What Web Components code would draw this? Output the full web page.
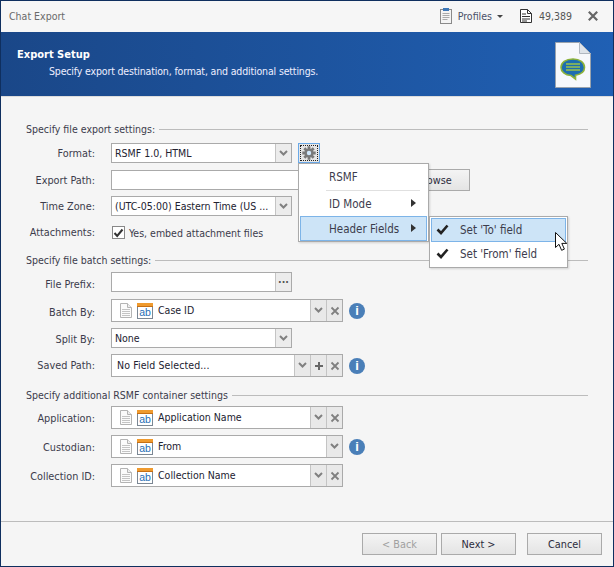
<!DOCTYPE html>
<html><head><meta charset="utf-8"><style>
html,body{margin:0;padding:0;background:#f5f5f5}
body{font:10.5px "DejaVu Sans Condensed","DejaVu Sans",sans-serif;color:#3c3c4c}
</style></head><body>
<x-window>
  <x-titlebar slot="title"></x-titlebar>
  <x-banner slot="banner" heading="Export Setup" sub="Specify export destination, format, and additional settings."></x-banner>
  <x-group label="Specify file export settings:" top="25" below="7">
    <x-row label="Format:"><x-combo h="20" text="RSMF 1.0, HTML"></x-combo><x-gear></x-gear></x-row>
    <x-row label="Export Path:" gap="7"><x-input w="283" h="20"></x-input><x-button w="72" h="22" style="margin:-1px 0 -1px -2px">Browse</x-button></x-row>
    <x-row label="Time Zone:" gap="6"><x-combo h="20" text="(UTC-05:00) Eastern Time (US ..."></x-combo></x-row>
    <x-row label="Attachments:" gap="10"><x-check>Yes, embed attachment files</x-check></x-row>
  </x-group>
  <x-group label="Specify file batch settings:" top="14" below="5">
    <x-row label="File Prefix:" ly="2"><x-combo h="20" dots></x-combo></x-row>
    <x-row label="Batch By:" gap="7" ly="2"><x-field text="Case ID" icons btns="vx"></x-field><x-info></x-info></x-row>
    <x-row label="Split By:" gap="6" ly="1"><x-combo h="20" text="None"></x-combo></x-row>
    <x-row label="Saved Path:" gap="6"><x-field text="No Field Selected..." btns="v+x"></x-field><x-info></x-info></x-row>
  </x-group>
  <x-group label="Specify additional RSMF container settings" top="11" below="4">
    <x-row label="Application:" ly="1"><x-field text="Application Name" icons btns="vx"></x-field></x-row>
    <x-row label="Custodian:" gap="6" ly="1"><x-field text="From" icons btns="v"></x-field><x-info></x-info></x-row>
    <x-row label="Collection ID:" gap="6" ly="1"><x-field text="Collection Name" icons btns="vx"></x-field></x-row>
  </x-group>
  <x-footer slot="footer">
    <x-button w="75" h="22" disabled>&lt; Back</x-button>
    <x-button w="75" h="22">Next &gt;</x-button>
    <x-button w="75" h="22" style="margin-left:7px">Cancel</x-button>
  </x-footer>
  <x-menu slot="overlay"></x-menu>
</x-window>
<script>
const FONT='"DejaVu Sans Condensed","DejaVu Sans",sans-serif';
function def(name,css,html,init){
  customElements.define(name,class extends HTMLElement{
    connectedCallback(){
      if(this.shadowRoot)return;
      const s=this.attachShadow({mode:'open'});
      s.innerHTML='<style>'+css+'</style>'+(typeof html==='function'?html(this):html);
      if(init)init(this,s);
    }
  });
}
const esc=t=>(t||'').replace(/&/g,'&amp;').replace(/</g,'&lt;');
const CHEV='<svg width="9" height="7" viewBox="0 0 9 7"><path d="M1 1l3.500 3.500L8 1" fill="none" stroke="#808080" stroke-width="2"/></svg>';
const CROSS='<svg width="10" height="10" viewBox="0 0 10 10"><path d="M1.500 1.500l7 7M8.500 1.500l-7 7" fill="none" stroke="#808080" stroke-width="1.800"/></svg>';
const PLUS='<svg width="10" height="10" viewBox="0 0 10 10"><path d="M5 1v8M1 5h8" fill="none" stroke="#666" stroke-width="2"/></svg>';
const DOC='<svg width="12" height="15" viewBox="0 0 12 15"><path d="M.5.500h7l4 4v10H.5z" fill="#fbfbfb" stroke="#b4b4b4"/><path d="M7.500.500v4h4" fill="#eee" stroke="#b4b4b4"/><path d="M2 6.500h8M2 8.500h8M2 10.500h8M2 12.500h8" stroke="#c4c4c4"/></svg>';
const AB='<svg class="a" width="16" height="16" viewBox="0 0 16 16"><rect x=".5" y=".5" width="15" height="15" fill="#fff" stroke="#7b8794"/><rect x="0" y="0" width="16" height="3" fill="#ef9a2e"/><rect x="0" y="3" width="16" height="1" fill="#c66f14"/><text x="8" y="13.300" text-anchor="middle" font-family="Liberation Sans,sans-serif" font-size="10.500" fill="#1f6fb5">ab</text></svg>';

def('x-window',`:host{display:block;box-sizing:border-box;width:614px;height:567px;border:1px solid #0f2f5f;background:#f5f5f5;position:relative;overflow:hidden}
.wrap{display:flex;flex-direction:column;height:100%}
.body{flex:1;padding:0 25px}
`,`<div class="wrap"><slot name="title"></slot><slot name="banner"></slot><div class="body"><slot></slot></div><slot name="footer"></slot></div><slot name="overlay"></slot>`);

def('x-titlebar',`:host{display:flex;align-items:center;box-sizing:border-box;height:31px;flex:none;background:#f6f6f6;font:10.5px ${FONT};color:#6a6a6a;padding:0 15px 1px 8px}
.t{flex:1}.p{color:#4a5068;margin-left:6px}.c{margin-left:5px;width:0;height:0;border:3px solid transparent;border-top:3px solid #444;border-bottom:0}
.n{color:#555;margin-left:7px}svg{display:block;flex:none}`,
`<span class="t">Chat Export</span>
<svg width="12" height="16" viewBox="0 0 12 16"><rect x=".5" y="1.500" width="11" height="14" fill="#f4f4f4" stroke="#8a8a8a"/><rect x="3" y="0" width="6" height="3" fill="#3d78b8"/><path d="M2.500 5.500h7M2.500 7.500h7M2.500 9.500h7M2.500 11.500h5" stroke="#aaa"/></svg>
<span class="p">Profiles</span><span class="c"></span>
<svg style="margin-left:17px" width="12" height="14" viewBox="0 0 12 14"><path d="M.5.500h7l4 4v9H.5z" fill="#fff" stroke="#333"/><path d="M7.500.500v4h4" fill="none" stroke="#333"/><path d="M2 5h4M2 7.500h8M2 10h8M2 12h5" stroke="#333"/></svg>
<span class="n">49,389</span>
<svg style="margin-left:16px" width="10" height="10" viewBox="0 0 10 10"><path d="M.8.8l8.400 8.400M9.200.8L.8 9.200" stroke="#666" stroke-width="2.200"/></svg>`);

def('x-banner',`:host{display:flex;align-items:flex-start;flex:none;height:65px;box-sizing:border-box;background:linear-gradient(90deg,#1a4788,#2060b4);border-bottom:1px solid #dcdcdc;color:#fff;padding:16px 22px 0 16px;font:10.5px ${FONT}}
.m{flex:1}.h{font-weight:bold;line-height:14px;font-size:11px}.s{margin-left:32px;line-height:16px;margin-top:1px;color:#eef;letter-spacing:-.16px}
svg{display:block;margin-top:-6px}`,
t=>`<div class="m"><div class="h">${esc(t.getAttribute('heading'))}</div><div class="s">${esc(t.getAttribute('sub'))}</div></div>
<svg width="36" height="46" viewBox="0 0 36 46"><path d="M.5.500h24l11 11v34H.5z" fill="#f6f8fc" stroke="#9aa3ad"/><path d="M24.500.500v11h11z" fill="#dde3ea" stroke="#b0b7c0"/><path d="M18 17c-7.500 0-12 3.700-12 8.400 0 4.300 4 7.600 10 8.100l4.500 3.500v-3.800c5-1 9-3.800 9-7.800 0-4.700-4.500-8.400-11.500-8.400z" fill="#1e6db0" stroke="#8cb23a" stroke-width="1.600"/><path d="M11 22h14M11 25h14M11 28h14" stroke="#9cc24a" stroke-width="1.600"/></svg>`);

def('x-group',`:host{display:block;font:10.5px ${FONT}}
.hd{display:flex;align-items:center;height:14px;color:#3c3c4c}.hd i{flex:1;border-top:1px solid #bcbcbc;margin-left:4px;margin-top:1px}
`,t=>`<div class="hd" style="margin-top:${t.getAttribute('top')||0}px;margin-bottom:${t.getAttribute('below')||0}px"><span>${esc(t.getAttribute('label'))}</span><i></i></div><slot></slot>`);

def('x-row',`:host{display:flex;align-items:center;font:10.5px ${FONT}}
label{width:69px;margin-right:16px;text-align:right;color:#3c3c4c;white-space:nowrap;flex:none;font-size:10.8px}
.c{display:flex;align-items:center;gap:6px}`,
t=>`<label style="padding-top:${2*(+t.getAttribute('ly')||0)}px">${esc(t.getAttribute('label'))}</label><div class="c"><slot></slot></div>`,
t=>{t.style.marginTop=(t.getAttribute('gap')||0)+'px'});

def('x-combo',`:host{display:flex;box-sizing:border-box;width:181px;background:#fff;border:1px solid #aaa;font:10.5px ${FONT};color:#222230}
.t{flex:1;min-width:0;padding-left:3px;white-space:nowrap;overflow:hidden;align-self:center}
.b{width:15px;flex:none;border-left:1px solid #c4c4c4;background:#ececec;display:flex;align-items:center;justify-content:center;color:#555;font-weight:bold}`,
t=>`<span class="t">${esc(t.getAttribute('text'))}</span><span class="b">${t.hasAttribute('dots')?'···':CHEV}</span>`,
t=>{t.style.height=t.getAttribute('h')+'px'});

def('x-input',`:host{display:block;box-sizing:border-box;background:#fff;border:1px solid #aaa}`,'',
t=>{t.style.width=t.getAttribute('w')+'px';t.style.height=t.getAttribute('h')+'px'});

def('x-gear',`:host{display:block;box-sizing:border-box;width:22px;height:20px;border:1px solid #6aa9e8;background:#e6e6e6;padding:1px}
div{box-sizing:border-box;height:100%;border:1px dotted #222;display:flex;align-items:center;justify-content:center}`,
`<div><svg width="14" height="14" viewBox="0 0 14 14"><g stroke="#7a7a7a" stroke-width="2.800"><path d="M7 .3v13.400M.3 7h13.400M2.300 2.300l9.400 9.400M11.700 2.300l-9.400 9.400"/></g><circle cx="7" cy="7" r="3.400" fill="#cfe6fa" stroke="#7a7a7a" stroke-width="2.400"/></svg></div>`);

def('x-check',`:host{display:flex;align-items:center;gap:4px;height:13px;font:10.5px ${FONT};color:#3c3c4c;margin-left:1px}
b{box-sizing:border-box;width:13px;height:13px;background:#fff;border:1px solid #888;display:flex;align-items:center;justify-content:center}`,
`<b><svg width="11" height="10" viewBox="0 0 11 10"><path d="M1.500 5l2.700 3L9.500 1.500" fill="none" stroke="#333" stroke-width="2"/></svg></b><span><slot></slot></span>`);

def('x-field',`:host{display:flex;box-sizing:border-box;width:232px;height:23px;background:#fff;border:1px solid #aaa;font:10.5px ${FONT};color:#222230}
.m{flex:1;display:flex;align-items:flex-start;padding-top:3px;padding-left:8px;white-space:nowrap}
.m.plain{padding-left:5px;align-items:center;padding-top:0;padding-bottom:1px}
.m svg{flex:none;display:block}.m svg.a{margin-left:5px}.m span{margin-left:5px;line-height:14px}
.m.plain span{margin-left:0;letter-spacing:.1px}
.b{width:15px;flex:none;border-left:1px solid #c4c4c4;background:#e9e9e9;display:flex;align-items:center;justify-content:center}`,
t=>{const ic=t.hasAttribute('icons');const bs=[...t.getAttribute('btns')].map(c=>`<span class="b">${c=='v'?CHEV:c=='x'?CROSS:PLUS}</span>`).join('');
return `<div class="m ${ic?'':'plain'}">${ic?DOC+AB:''}<span>${esc(t.getAttribute('text'))}</span></div>${bs}`});

def('x-info',`:host{display:block;width:16px;height:16px;border-radius:50%;background:#4a7fb8;color:#fff;font:bold 13px "Liberation Sans",sans-serif;text-align:center;line-height:16px}`,`i`);

def('x-button',`:host{display:inline-flex;align-items:center;justify-content:center;box-sizing:border-box;border:1px solid #aaa;background:linear-gradient(#f4f4f4,#e4e4e4);font:10.8px ${FONT};color:#2c2c3c}
:host([disabled]){color:#a0a0a0}`,`<slot></slot>`,
t=>{t.style.width=t.getAttribute('w')+'px';t.style.height=t.getAttribute('h')+'px'});

def('x-footer',`:host{display:flex;flex:none;height:45px;box-sizing:border-box;border-top:1px solid #bcbcbc;padding:11px 11px 0 0;justify-content:flex-end;gap:4px}`,`<slot></slot>`);

const ARR='<svg class="ar" width="5" height="8" viewBox="0 0 5 8"><path d="M0 0l5 4-5 4z" fill="#333"/></svg>';
const TK='<svg class="tk" width="13" height="11" viewBox="0 0 13 11"><path d="M1.500 5.500l3.500 3.500L11.500 1.500" fill="none" stroke="#222" stroke-width="2.600"/></svg>';
def('x-menu',`:host{position:absolute;left:297px;top:162px;display:block;font:11.5px ${FONT};color:#3c3c4c}
.p{position:absolute;box-sizing:border-box;background:#fff;border:1px solid #aaa;box-shadow:1px 1px 2px rgba(0,0,0,.15);white-space:nowrap}
.m{left:0;top:0;width:131px;height:79px;padding:1px 1px 0}
.s{left:131px;top:53px;width:139px;height:52px;padding:1px}
.i{display:flex;align-items:center;box-sizing:border-box;height:25px;padding-left:28px;position:relative;border:1px solid transparent}
.i svg.ar{position:absolute;right:10px;top:7px}
.h{background:#cde4f7;border-color:#7db4e8}
hr{border:0;border-top:1px solid #e0e0e0;margin:1px 7px 0 26px}
.s .i{height:24px}.s svg.tk{position:absolute;left:4px;top:5px}
.c{position:absolute;left:257px;top:69px}`,
`<div class="p m"><div class="i" style="height:24px">RSMF</div><hr><div class="i">ID Mode${ARR}</div><div class="i h">Header Fields${ARR}</div></div>
<div class="p s"><div class="i h">${TK}Set 'To' field</div><div class="i">${TK}Set 'From' field</div></div>
<svg class="c" width="13" height="19" viewBox="0 0 13 19"><path d="M.5.500v15l3.500-3.200 2.600 6 2.800-1.200-2.600-5.700h5z" fill="#fff" stroke="#111"/></svg>`);
</script>
</body></html>
